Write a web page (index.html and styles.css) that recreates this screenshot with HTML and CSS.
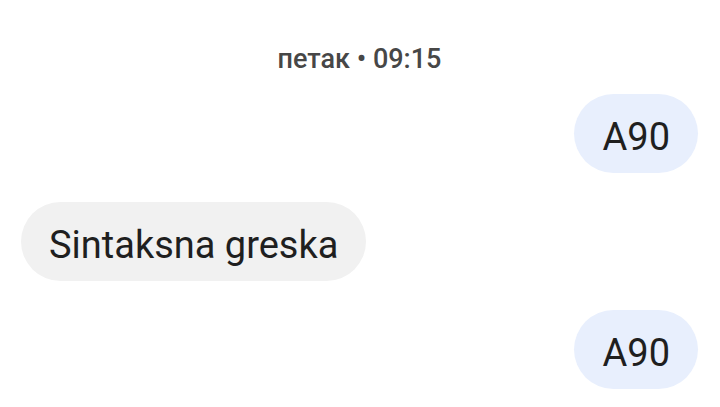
FILE: index.html
```html
<!DOCTYPE html>
<html lang="sr">
<head>
  <meta charset="UTF-8" />
  <meta name="viewport" content="width=device-width, initial-scale=1.0"/>
  <title>Poruke</title>
  <link rel="stylesheet" href="styles.css">
</head>
<body>
  <div class="thread">
    <div class="stamp"><span class="day">петак</span> • 09:15</div>

    <div class="msg out"><div class="bubble">A90</div></div>
    <div class="msg in"><div class="bubble">Sintaksna greska</div></div>
    <div class="msg out"><div class="bubble">A90</div></div>
  </div>
</body>
</html>
```

FILE: styles.css
```css
:root {
  --text: #1f1f1f;
  --muted: #474747;
  --out-bg: #e8effd;
  --in-bg: #f1f1f1;
}

* {
  box-sizing: border-box;
  margin: 0;
  padding: 0;
}

body {
  font-family: Roboto, "Noto Sans", sans-serif;
  background: #ffffff;
  color: var(--text);
  width: 720px;
  height: 407px;
  overflow: hidden;
}

.thread {
  display: flex;
  flex-direction: column;
  gap: 29px;
  padding: 40px 22px 0 21px;
}

.stamp {
  text-align: center;
  font-size: 27px;
  font-weight: 500;
  color: var(--muted);
  line-height: 32px;
  padding-top: 3px;
  margin-bottom: -10px;
}

.msg {
  display: flex;
}

.msg.out {
  justify-content: flex-end;
}

.msg.in {
  justify-content: flex-start;
}

.bubble {
  font-size: 38px;
  line-height: 45px;
  padding: 21px 28px 13px;
  border-radius: 40px;
}

.out .bubble {
  background: var(--out-bg);
}

.in .bubble {
  background: var(--in-bg);
}
```
